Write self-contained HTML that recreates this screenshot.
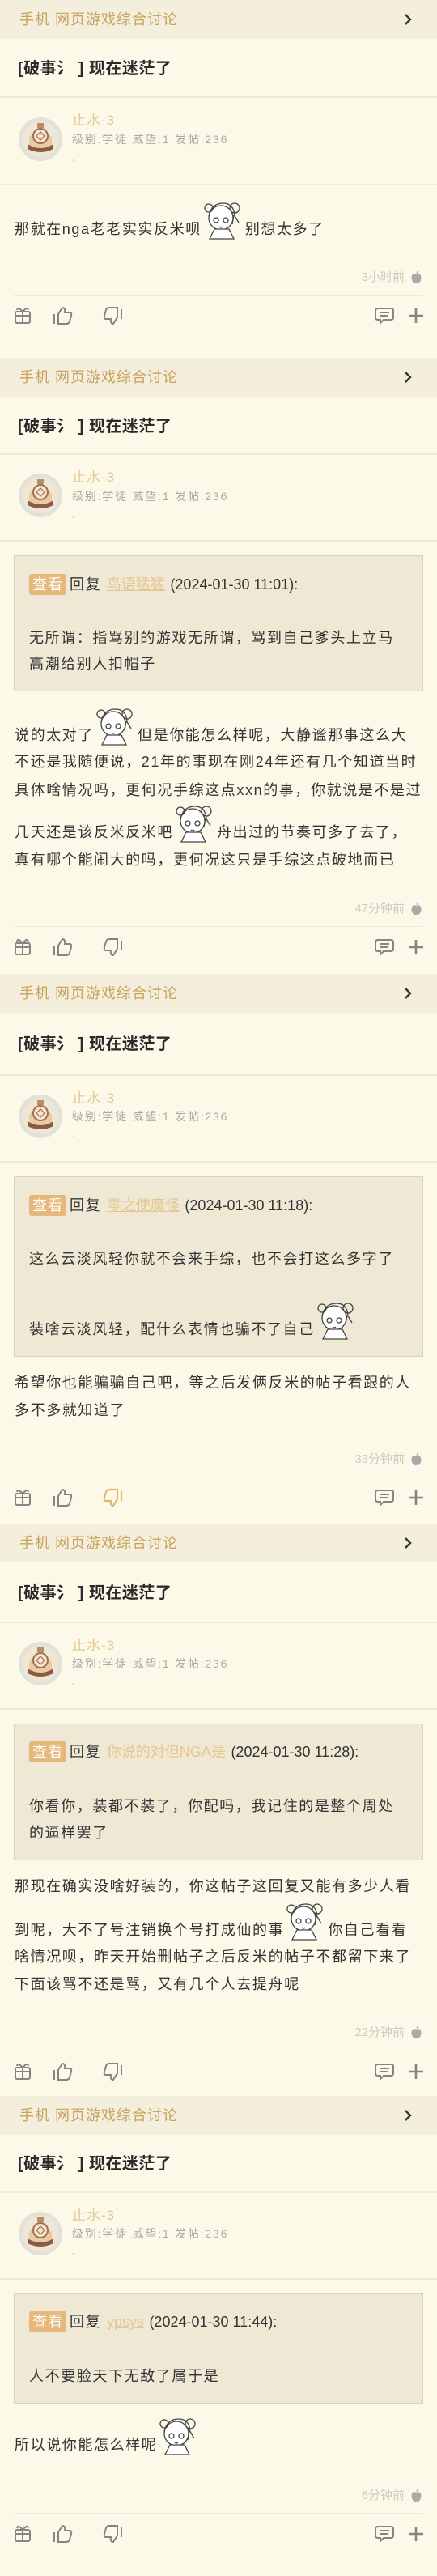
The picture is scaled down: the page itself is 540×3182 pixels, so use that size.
<!DOCTYPE html>
<html><head><meta charset="utf-8"><style>
*{margin:0;padding:0;box-sizing:border-box}
body{width:540px;height:3182px;background:#fdf9e9;position:relative;overflow:hidden;font-family:"Liberation Sans","Noto Sans CJK SC",sans-serif}
.hd{position:absolute;left:0;width:540px;height:48px;background:#f3efdc}
.hd span{position:absolute;left:24px;top:0;line-height:48px;font-size:18px;letter-spacing:1px;color:#c9a25e}
.hd i{position:absolute;left:497px;top:16px}
.t{position:absolute;left:22px;font-size:20px;font-weight:bold;color:#2a2a2a;line-height:28px;letter-spacing:.5px}
.sep{position:absolute;left:0;width:540px;height:2px;background:#efe9d7}
.av{position:absolute;left:22px;width:56px;height:56px}
.nm{position:absolute;left:89px;font-size:17px;color:#e2c896;line-height:20px;letter-spacing:1px}
.st{position:absolute;left:89px;font-size:14px;color:#acaaa2;line-height:16px;letter-spacing:1.8px}
.ds{position:absolute;left:89px;font-size:11px;color:#bbb;line-height:12px}
.l{position:absolute;left:18px;font-size:18px;letter-spacing:1.6px;line-height:24px;color:#333;white-space:nowrap}
.q{position:absolute;left:17px;width:506px;background:#eee8d4;border:1.5px solid #d9d3be}
.ql{left:36px}
.bd{display:inline-block;background:#e6b87c;color:#fff;border-radius:3px;padding:0 4px;line-height:26px;letter-spacing:1px;margin-right:4px}
.lk{color:#e6c690;text-decoration:underline;letter-spacing:0}
.dt{letter-spacing:0}
.tm{position:absolute;right:40px;font-size:15px;color:#cfcbbf;line-height:18px}
.ap{position:absolute;left:507px}
.ln{position:absolute;left:17px;width:506px;height:1px;background:#eee8d6}
.ic{position:absolute}
.emo{display:inline-block;vertical-align:-8px;margin-top:-30px}
</style></head><body>

<!-- BLOCK 1 -->
<div class="hd" style="top:0"><span>手机 网页游戏综合讨论</span><i><svg width="14" height="16" viewBox="0 0 14 16"><path d="M4 2l6 6-6 6" fill="none" stroke="#333" stroke-width="2.4"/></svg></i></div>
<div class="t" style="top:71px">[破事氵 ] 现在迷茫了</div>
<div class="sep" style="top:119px"></div>
<svg class="av" style="top:144px" viewBox="0 0 56 56"><circle cx="28" cy="28" r="27" fill="#e4e1d8"/><circle cx="28" cy="28" r="22" fill="#efe7d6"/><rect x="14" y="22" width="28" height="18" rx="6" fill="#e8cba5"/><path d="M12 34q16 10 32 0v6q-16 8-32 0z" fill="#8d5a45"/><circle cx="28" cy="24" r="9" fill="#f3e6d0" stroke="#a66c4e" stroke-width="2"/><path d="M23 24l5-5 5 5-5 5z" fill="none" stroke="#a66c4e" stroke-width="1.2"/><rect x="24" y="8" width="8" height="6" fill="#b98c6a"/></svg>
<div class="nm" style="top:139px">止水-3</div>
<div class="st" style="top:164px">级别:学徒 威望:1 发帖:236</div>
<div class="ds" style="top:192px">-</div>
<div class="sep" style="top:227px"></div>
<div class="l" style="top:271px">那就在nga老老实实反米呗<svg class="emo" width="54" height="52" viewBox="0 0 54 52"><g fill="none" stroke="#444" stroke-width="1.3"><circle cx="24" cy="24" r="15" fill="#fff"/><path d="M9 22q3-16 18-16q12 0 14 14"/><circle cx="41" cy="12" r="6"/><circle cx="9" cy="12" r="5"/><path d="M40 20l6 10M40 20l-2 12"/><circle cx="18" cy="27" r="3"/><circle cx="30" cy="27" r="3"/><path d="M10 50l6-12h18l6 12z" fill="#fff"/><path d="M22 35q2 2 4 0"/></g></svg>别想太多了</div>
<div class="tm" style="top:334px">3小时前</div>
<svg class="ap" style="top:334px" width="15" height="17" viewBox="0 0 15 17"><path d="M7.5 5c-2-1.5-6-1-6 4 0 4 3 8 5 7 1-.5 1-.5 2 0 2 1 5-3 5-7 0-5-4-5.5-6-4z" fill="#aaa"/><path d="M7.5 4q0-3 3-3.5q0 3-3 3.5z" fill="#aaa"/></svg>
<div class="ln" style="top:365px"></div>
<svg class="ic" style="left:17px;top:377px" width="506" height="24" viewBox="0 0 506 24"><g fill="none" stroke="#858585" stroke-width="2"><rect x="2" y="8" width="18" height="14" rx="2"/><path d="M2 13h18M11 8v14M11 8q-6-7-7-2M11 8q6-7 7-2"/><path d="M50 11v12M55 11l5-8q4 0 3 6h6q3 0 2 4l-2 7q-1 3-4 3h-10z"/><path d="M133 5v12M128 15l-5 8q-4 0-3-6h-6q-3 0-2-4l2-7q1-3 4-3h10z"/><path d="M450 4h16q3 0 3 3v8q0 3-3 3h-9l-4 4v-4h-3q-3 0-3-3v-8q0-3 3-3z"/><path d="M452 9h12M452 13h10"/><path d="M497 4v18M488 13h18" stroke-width="2.6"/></g></svg>

<!-- BLOCK 2 -->
<div class="hd" style="top:442px"><span>手机 网页游戏综合讨论</span><i><svg width="14" height="16" viewBox="0 0 14 16"><path d="M4 2l6 6-6 6" fill="none" stroke="#333" stroke-width="2.4"/></svg></i></div>
<div class="t" style="top:513px">[破事氵 ] 现在迷茫了</div>
<div class="sep" style="top:560px"></div>
<svg class="av" style="top:584px" viewBox="0 0 56 56"><circle cx="28" cy="28" r="27" fill="#e4e1d8"/><circle cx="28" cy="28" r="22" fill="#efe7d6"/><rect x="14" y="22" width="28" height="18" rx="6" fill="#e8cba5"/><path d="M12 34q16 10 32 0v6q-16 8-32 0z" fill="#8d5a45"/><circle cx="28" cy="24" r="9" fill="#f3e6d0" stroke="#a66c4e" stroke-width="2"/><path d="M23 24l5-5 5 5-5 5z" fill="none" stroke="#a66c4e" stroke-width="1.2"/><rect x="24" y="8" width="8" height="6" fill="#b98c6a"/></svg>
<div class="nm" style="top:580px">止水-3</div>
<div class="st" style="top:605px">级别:学徒 威望:1 发帖:236</div>
<div class="ds" style="top:633px">-</div>
<div class="sep" style="top:667px"></div>
<div class="q" style="top:686px;height:168px"></div>
<div class="l ql" style="top:708px;line-height:28px"><span class="bd">查看</span>回复 <span class="lk">鸟语猛猛</span> <span class="dt">(2024-01-30 11:01):</span></div>
<div class="l ql" style="top:776px">无所谓：指骂别的游戏无所谓，骂到自己爹头上立马</div>
<div class="l ql" style="top:808px">高潮给别人扣帽子</div>
<div class="l" style="top:896px">说的太对了<svg class="emo" width="54" height="52" viewBox="0 0 54 52"><g fill="none" stroke="#444" stroke-width="1.3"><circle cx="24" cy="24" r="15" fill="#fff"/><path d="M9 22q3-16 18-16q12 0 14 14"/><circle cx="41" cy="12" r="6"/><circle cx="9" cy="12" r="5"/><path d="M40 20l6 10M40 20l-2 12"/><circle cx="18" cy="27" r="3"/><circle cx="30" cy="27" r="3"/><path d="M10 50l6-12h18l6 12z" fill="#fff"/><path d="M22 35q2 2 4 0"/></g></svg>但是你能怎么样呢，大静谧那事这么大</div>
<div class="l" style="top:929px">不还是我随便说，21年的事现在刚24年还有几个知道当时</div>
<div class="l" style="top:964px">具体啥情况吗，更何况手综这点xxn的事，你就说是不是过</div>
<div class="l" style="top:1016px">几天还是该反米反米吧<svg class="emo" width="54" height="52" viewBox="0 0 54 52"><g fill="none" stroke="#444" stroke-width="1.3"><circle cx="24" cy="24" r="15" fill="#fff"/><path d="M9 22q3-16 18-16q12 0 14 14"/><circle cx="41" cy="12" r="6"/><circle cx="9" cy="12" r="5"/><path d="M40 20l6 10M40 20l-2 12"/><circle cx="18" cy="27" r="3"/><circle cx="30" cy="27" r="3"/><path d="M10 50l6-12h18l6 12z" fill="#fff"/><path d="M22 35q2 2 4 0"/></g></svg>舟出过的节奏可多了去了，</div>
<div class="l" style="top:1050px">真有哪个能闹大的吗，更何况这只是手综这点破地而已</div>
<div class="tm" style="top:1114px">47分钟前</div>
<svg class="ap" style="top:1114px" width="15" height="17" viewBox="0 0 15 17"><path d="M7.5 5c-2-1.5-6-1-6 4 0 4 3 8 5 7 1-.5 1-.5 2 0 2 1 5-3 5-7 0-5-4-5.5-6-4z" fill="#aaa"/><path d="M7.5 4q0-3 3-3.5q0 3-3 3.5z" fill="#aaa"/></svg>
<div class="ln" style="top:1144px"></div>
<svg class="ic" style="left:17px;top:1157px" width="506" height="24" viewBox="0 0 506 24"><g fill="none" stroke="#858585" stroke-width="2"><rect x="2" y="8" width="18" height="14" rx="2"/><path d="M2 13h18M11 8v14M11 8q-6-7-7-2M11 8q6-7 7-2"/><path d="M50 11v12M55 11l5-8q4 0 3 6h6q3 0 2 4l-2 7q-1 3-4 3h-10z"/><path d="M133 5v12M128 15l-5 8q-4 0-3-6h-6q-3 0-2-4l2-7q1-3 4-3h10z"/><path d="M450 4h16q3 0 3 3v8q0 3-3 3h-9l-4 4v-4h-3q-3 0-3-3v-8q0-3 3-3z"/><path d="M452 9h12M452 13h10"/><path d="M497 4v18M488 13h18" stroke-width="2.6"/></g></svg>

<!-- BLOCK 3 -->
<div class="hd" style="top:1203px"><span>手机 网页游戏综合讨论</span><i><svg width="14" height="16" viewBox="0 0 14 16"><path d="M4 2l6 6-6 6" fill="none" stroke="#333" stroke-width="2.4"/></svg></i></div>
<div class="t" style="top:1276px">[破事氵 ] 现在迷茫了</div>
<div class="sep" style="top:1327px"></div>
<svg class="av" style="top:1351px" viewBox="0 0 56 56"><circle cx="28" cy="28" r="27" fill="#e4e1d8"/><circle cx="28" cy="28" r="22" fill="#efe7d6"/><rect x="14" y="22" width="28" height="18" rx="6" fill="#e8cba5"/><path d="M12 34q16 10 32 0v6q-16 8-32 0z" fill="#8d5a45"/><circle cx="28" cy="24" r="9" fill="#f3e6d0" stroke="#a66c4e" stroke-width="2"/><path d="M23 24l5-5 5 5-5 5z" fill="none" stroke="#a66c4e" stroke-width="1.2"/><rect x="24" y="8" width="8" height="6" fill="#b98c6a"/></svg>
<div class="nm" style="top:1347px">止水-3</div>
<div class="st" style="top:1371px">级别:学徒 威望:1 发帖:236</div>
<div class="ds" style="top:1398px">-</div>
<div class="sep" style="top:1434px"></div>
<div class="q" style="top:1453px;height:223px"></div>
<div class="l ql" style="top:1475px;line-height:28px"><span class="bd">查看</span>回复 <span class="lk">零之使魔怪</span> <span class="dt">(2024-01-30 11:18):</span></div>
<div class="l ql" style="top:1543px">这么云淡风轻你就不会来手综，也不会打这么多字了</div>
<div class="l ql" style="top:1630px">装啥云淡风轻，配什么表情也骗不了自己<svg class="emo" width="54" height="52" viewBox="0 0 54 52"><g fill="none" stroke="#444" stroke-width="1.3"><circle cx="24" cy="24" r="15" fill="#fff"/><path d="M9 22q3-16 18-16q12 0 14 14"/><circle cx="41" cy="12" r="6"/><circle cx="9" cy="12" r="5"/><path d="M40 20l6 10M40 20l-2 12"/><circle cx="18" cy="27" r="3"/><circle cx="30" cy="27" r="3"/><path d="M10 50l6-12h18l6 12z" fill="#fff"/><path d="M22 35q2 2 4 0"/></g></svg></div>
<div class="l" style="top:1696px">希望你也能骗骗自己吧，等之后发俩反米的帖子看跟的人</div>
<div class="l" style="top:1730px">多不多就知道了</div>
<div class="tm" style="top:1794px">33分钟前</div>
<svg class="ap" style="top:1794px" width="15" height="17" viewBox="0 0 15 17"><path d="M7.5 5c-2-1.5-6-1-6 4 0 4 3 8 5 7 1-.5 1-.5 2 0 2 1 5-3 5-7 0-5-4-5.5-6-4z" fill="#aaa"/><path d="M7.5 4q0-3 3-3.5q0 3-3 3.5z" fill="#aaa"/></svg>
<div class="ln" style="top:1824px"></div>
<svg class="ic" style="left:17px;top:1837px" width="506" height="24" viewBox="0 0 506 24"><g fill="none" stroke="#858585" stroke-width="2"><rect x="2" y="8" width="18" height="14" rx="2"/><path d="M2 13h18M11 8v14M11 8q-6-7-7-2M11 8q6-7 7-2"/><path d="M50 11v12M55 11l5-8q4 0 3 6h6q3 0 2 4l-2 7q-1 3-4 3h-10z"/><path d="M450 4h16q3 0 3 3v8q0 3-3 3h-9l-4 4v-4h-3q-3 0-3-3v-8q0-3 3-3z"/><path d="M452 9h12M452 13h10"/><path d="M497 4v18M488 13h18" stroke-width="2.6"/></g><g fill="none" stroke="#e0b873" stroke-width="2.2"><path d="M133 5v12M128 15l-5 8q-4 0-3-6h-6q-3 0-2-4l2-7q1-3 4-3h10z"/></g></svg>

<!-- BLOCK 4 -->
<div class="hd" style="top:1882px"><span>手机 网页游戏综合讨论</span><i><svg width="14" height="16" viewBox="0 0 14 16"><path d="M4 2l6 6-6 6" fill="none" stroke="#333" stroke-width="2.4"/></svg></i></div>
<div class="t" style="top:1954px">[破事氵 ] 现在迷茫了</div>
<div class="sep" style="top:2003px"></div>
<svg class="av" style="top:2027px" viewBox="0 0 56 56"><circle cx="28" cy="28" r="27" fill="#e4e1d8"/><circle cx="28" cy="28" r="22" fill="#efe7d6"/><rect x="14" y="22" width="28" height="18" rx="6" fill="#e8cba5"/><path d="M12 34q16 10 32 0v6q-16 8-32 0z" fill="#8d5a45"/><circle cx="28" cy="24" r="9" fill="#f3e6d0" stroke="#a66c4e" stroke-width="2"/><path d="M23 24l5-5 5 5-5 5z" fill="none" stroke="#a66c4e" stroke-width="1.2"/><rect x="24" y="8" width="8" height="6" fill="#b98c6a"/></svg>
<div class="nm" style="top:2023px">止水-3</div>
<div class="st" style="top:2047px">级别:学徒 威望:1 发帖:236</div>
<div class="ds" style="top:2074px">-</div>
<div class="sep" style="top:2110px"></div>
<div class="q" style="top:2129px;height:169px"></div>
<div class="l ql" style="top:2150px;line-height:28px"><span class="bd">查看</span>回复 <span class="lk">你说的对但NGA是</span> <span class="dt">(2024-01-30 11:28):</span></div>
<div class="l ql" style="top:2219px">你看你，装都不装了，你配吗，我记住的是整个周处</div>
<div class="l ql" style="top:2252px">的逼样罢了</div>
<div class="l" style="top:2318px">那现在确实没啥好装的，你这帖子这回复又能有多少人看</div>
<div class="l" style="top:2372px">到呢，大不了号注销换个号打成仙的事<svg class="emo" width="54" height="52" viewBox="0 0 54 52"><g fill="none" stroke="#444" stroke-width="1.3"><circle cx="24" cy="24" r="15" fill="#fff"/><path d="M9 22q3-16 18-16q12 0 14 14"/><circle cx="41" cy="12" r="6"/><circle cx="9" cy="12" r="5"/><path d="M40 20l6 10M40 20l-2 12"/><circle cx="18" cy="27" r="3"/><circle cx="30" cy="27" r="3"/><path d="M10 50l6-12h18l6 12z" fill="#fff"/><path d="M22 35q2 2 4 0"/></g></svg>你自己看看</div>
<div class="l" style="top:2405px">啥情况呗，昨天开始删帖子之后反米的帖子不都留下来了</div>
<div class="l" style="top:2439px">下面该骂不还是骂，又有几个人去提舟呢</div>
<div class="tm" style="top:2502px">22分钟前</div>
<svg class="ap" style="top:2502px" width="15" height="17" viewBox="0 0 15 17"><path d="M7.5 5c-2-1.5-6-1-6 4 0 4 3 8 5 7 1-.5 1-.5 2 0 2 1 5-3 5-7 0-5-4-5.5-6-4z" fill="#aaa"/><path d="M7.5 4q0-3 3-3.5q0 3-3 3.5z" fill="#aaa"/></svg>
<div class="ln" style="top:2533px"></div>
<svg class="ic" style="left:17px;top:2546px" width="506" height="24" viewBox="0 0 506 24"><g fill="none" stroke="#858585" stroke-width="2"><rect x="2" y="8" width="18" height="14" rx="2"/><path d="M2 13h18M11 8v14M11 8q-6-7-7-2M11 8q6-7 7-2"/><path d="M50 11v12M55 11l5-8q4 0 3 6h6q3 0 2 4l-2 7q-1 3-4 3h-10z"/><path d="M133 5v12M128 15l-5 8q-4 0-3-6h-6q-3 0-2-4l2-7q1-3 4-3h10z"/><path d="M450 4h16q3 0 3 3v8q0 3-3 3h-9l-4 4v-4h-3q-3 0-3-3v-8q0-3 3-3z"/><path d="M452 9h12M452 13h10"/><path d="M497 4v18M488 13h18" stroke-width="2.6"/></g></svg>

<!-- BLOCK 5 -->
<div class="hd" style="top:2589px"><span>手机 网页游戏综合讨论</span><i><svg width="14" height="16" viewBox="0 0 14 16"><path d="M4 2l6 6-6 6" fill="none" stroke="#333" stroke-width="2.4"/></svg></i></div>
<div class="t" style="top:2659px">[破事氵 ] 现在迷茫了</div>
<div class="sep" style="top:2707px"></div>
<svg class="av" style="top:2731px" viewBox="0 0 56 56"><circle cx="28" cy="28" r="27" fill="#e4e1d8"/><circle cx="28" cy="28" r="22" fill="#efe7d6"/><rect x="14" y="22" width="28" height="18" rx="6" fill="#e8cba5"/><path d="M12 34q16 10 32 0v6q-16 8-32 0z" fill="#8d5a45"/><circle cx="28" cy="24" r="9" fill="#f3e6d0" stroke="#a66c4e" stroke-width="2"/><path d="M23 24l5-5 5 5-5 5z" fill="none" stroke="#a66c4e" stroke-width="1.2"/><rect x="24" y="8" width="8" height="6" fill="#b98c6a"/></svg>
<div class="nm" style="top:2727px">止水-3</div>
<div class="st" style="top:2751px">级别:学徒 威望:1 发帖:236</div>
<div class="ds" style="top:2778px">-</div>
<div class="sep" style="top:2814px"></div>
<div class="q" style="top:2833px;height:136px"></div>
<div class="l ql" style="top:2854px;line-height:28px"><span class="bd">查看</span>回复 <span class="lk">ypsys</span> <span class="dt">(2024-01-30 11:44):</span></div>
<div class="l ql" style="top:2923px">人不要脸天下无敌了属于是</div>
<div class="l" style="top:3008px">所以说你能怎么样呢<svg class="emo" width="54" height="52" viewBox="0 0 54 52"><g fill="none" stroke="#444" stroke-width="1.3"><circle cx="24" cy="24" r="15" fill="#fff"/><path d="M9 22q3-16 18-16q12 0 14 14"/><circle cx="41" cy="12" r="6"/><circle cx="9" cy="12" r="5"/><path d="M40 20l6 10M40 20l-2 12"/><circle cx="18" cy="27" r="3"/><circle cx="30" cy="27" r="3"/><path d="M10 50l6-12h18l6 12z" fill="#fff"/><path d="M22 35q2 2 4 0"/></g></svg></div>
<div class="tm" style="top:3074px">6分钟前</div>
<svg class="ap" style="top:3074px" width="15" height="17" viewBox="0 0 15 17"><path d="M7.5 5c-2-1.5-6-1-6 4 0 4 3 8 5 7 1-.5 1-.5 2 0 2 1 5-3 5-7 0-5-4-5.5-6-4z" fill="#aaa"/><path d="M7.5 4q0-3 3-3.5q0 3-3 3.5z" fill="#aaa"/></svg>
<div class="ln" style="top:3104px"></div>
<svg class="ic" style="left:17px;top:3117px" width="506" height="24" viewBox="0 0 506 24"><g fill="none" stroke="#858585" stroke-width="2"><rect x="2" y="8" width="18" height="14" rx="2"/><path d="M2 13h18M11 8v14M11 8q-6-7-7-2M11 8q6-7 7-2"/><path d="M50 11v12M55 11l5-8q4 0 3 6h6q3 0 2 4l-2 7q-1 3-4 3h-10z"/><path d="M133 5v12M128 15l-5 8q-4 0-3-6h-6q-3 0-2-4l2-7q1-3 4-3h10z"/><path d="M450 4h16q3 0 3 3v8q0 3-3 3h-9l-4 4v-4h-3q-3 0-3-3v-8q0-3 3-3z"/><path d="M452 9h12M452 13h10"/><path d="M497 4v18M488 13h18" stroke-width="2.6"/></g></svg>

</body></html>
